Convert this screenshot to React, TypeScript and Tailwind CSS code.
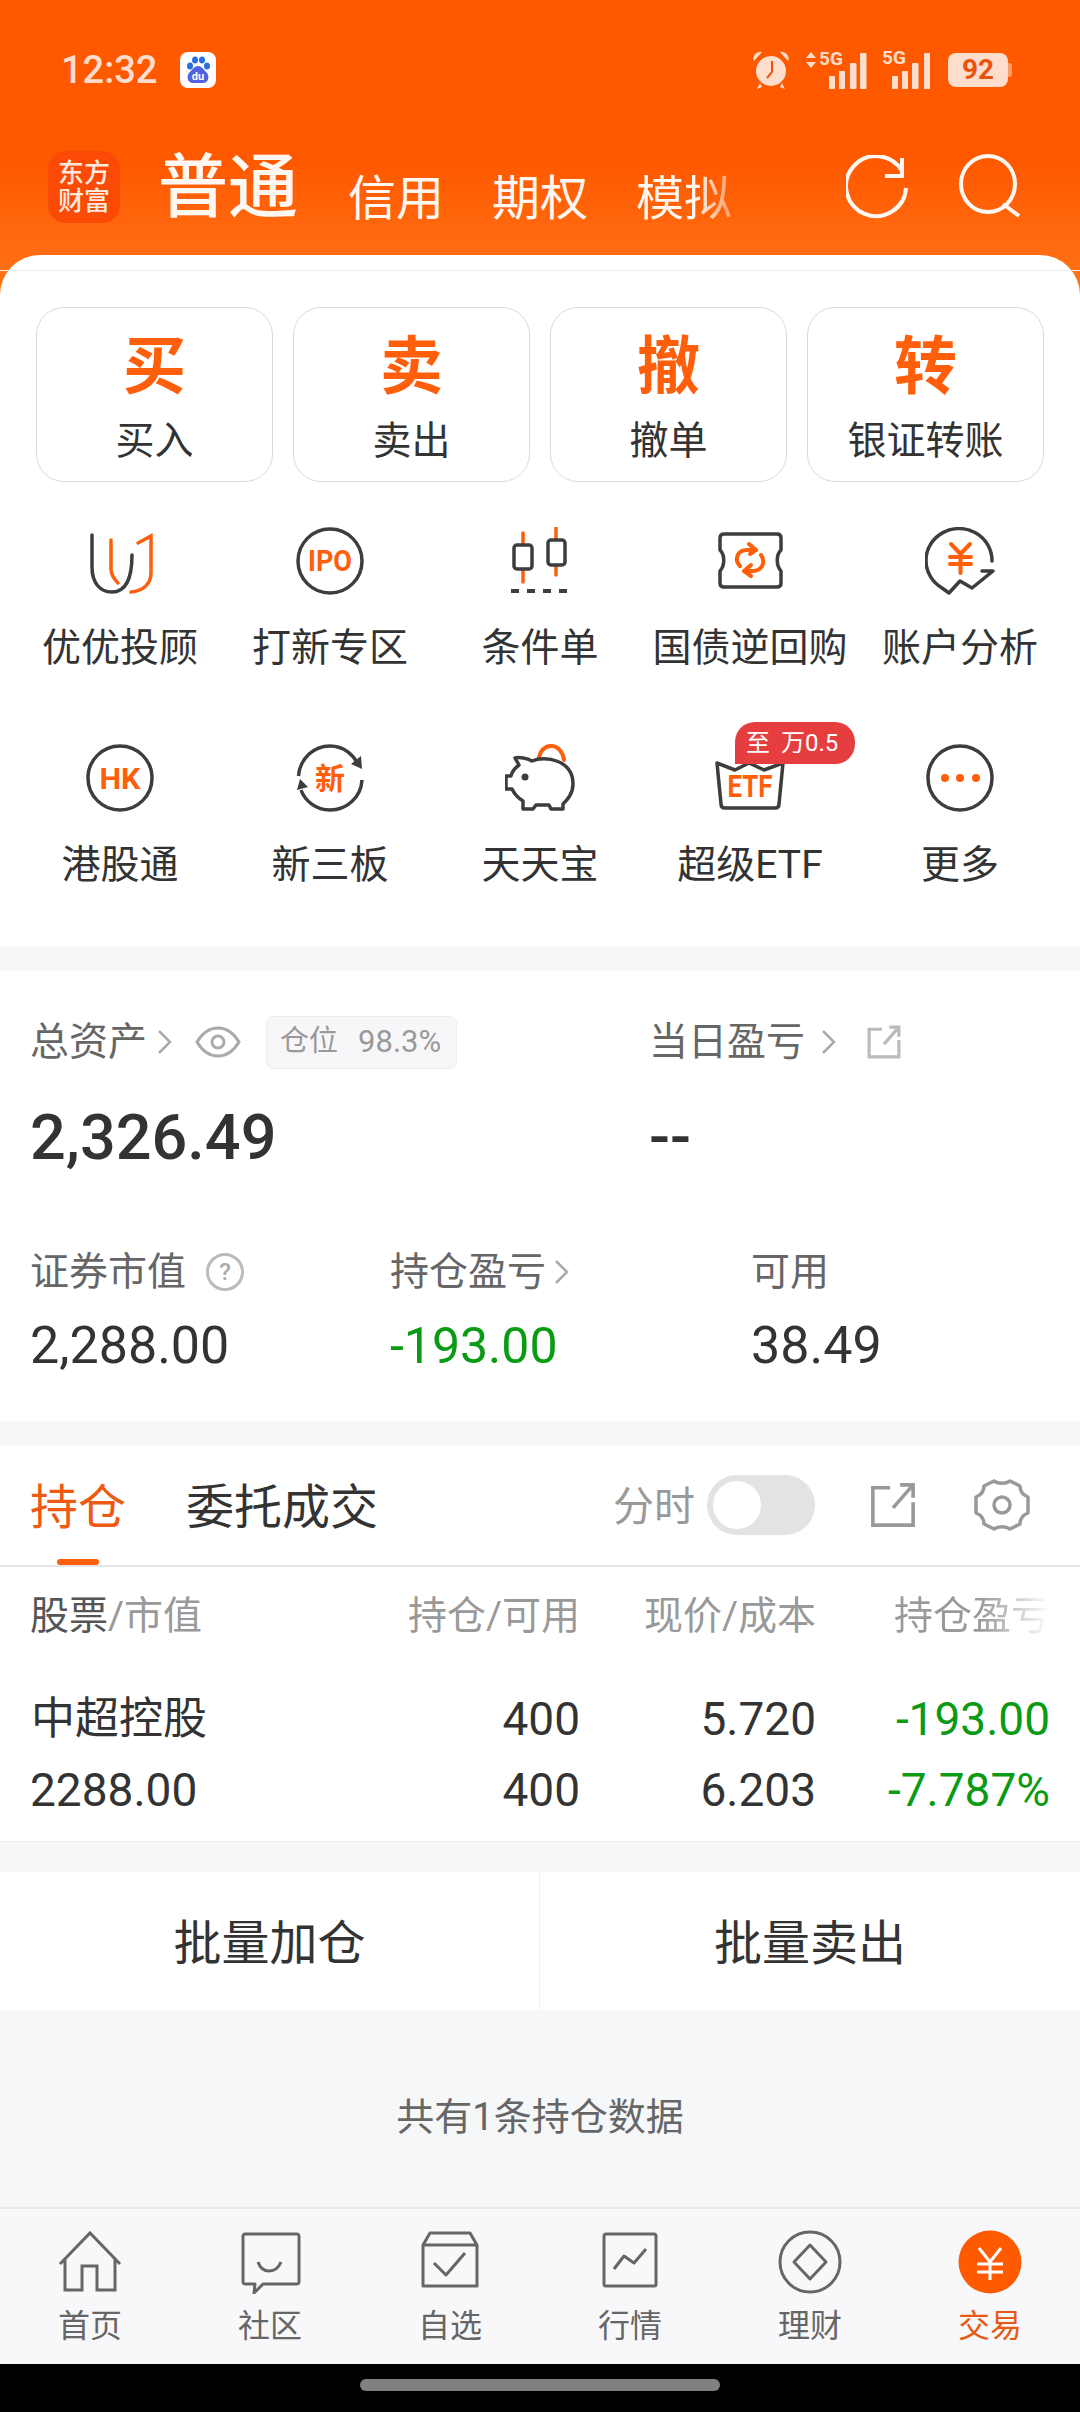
import type { ReactNode } from "react";

const ORANGE = "#ff5f0a";
const DARK = "#3d3d3d";

const actions = [
  { big: "买", label: "买入" },
  { big: "卖", label: "卖出" },
  { big: "撤", label: "撤单" },
  { big: "转", label: "银证转账" },
];

function Ring({ children }: { children?: ReactNode }) {
  return (
    <svg width="68" height="68" viewBox="0 0 68 68" fill="none">
      <circle cx="34" cy="34" r="32" stroke={DARK} strokeWidth="3.5" />
      {children}
    </svg>
  );
}

function IconUU() {
  return (
    <svg width="68" height="68" viewBox="0 0 68 68" fill="none" strokeWidth="3.5" strokeLinecap="round">
      <path d="M6 8V40C6 56 14 65 26 65C38 65 46 56 46 28" stroke={DARK} />
      <path d="M25 13V42C25 48 28 52 32 56" stroke={ORANGE} />
      <path d="M52 16L65 9V46C65 56 58 64 45 65" stroke={ORANGE} />
    </svg>
  );
}

function IconCandle() {
  return (
    <svg width="68" height="68" viewBox="0 0 68 68" fill="none" strokeLinecap="round">
      <path d="M17 6V55M50 1V48" stroke={ORANGE} strokeWidth="3.5" />
      <rect x="8" y="18" width="18" height="24" rx="3" fill="#fff" stroke={DARK} strokeWidth="3.5" />
      <rect x="42" y="13" width="17" height="25" rx="3" fill="#fff" stroke={DARK} strokeWidth="3.5" />
      <path d="M5 64H13M21 64H29M37 64H45M53 64H61" stroke={DARK} strokeWidth="4" strokeLinecap="butt" />
    </svg>
  );
}

function IconTicket() {
  return (
    <svg width="68" height="68" viewBox="0 0 68 68" fill="none" strokeLinecap="round" strokeLinejoin="round">
      <path d="M8 7H61C63.5 7 65 8.5 65 11V23C60 28 60 38 65 44V56C65 58.5 63.5 60 61 60H8C5.500 60 4 58.5 4 56V44C9 38 9 28 4 23V11C4 8.5 5.500 7 8 7Z" stroke={DARK} strokeWidth="3.500" />
      <path d="M24 39C18 33 21 23 31 23H39M33 17L40 23L34 27M45 28C50 35 46 44 37 44H29M35 38L28 44L35 49" stroke={ORANGE} strokeWidth="4" />
    </svg>
  );
}

function IconYen() {
  return (
    <svg width="70" height="68" viewBox="0 0 70 68" fill="none" strokeLinecap="round" strokeLinejoin="round">
      <path d="M67 34A33 32 0 1 0 17 61L24 66L35 54L47 61L68 44H57" stroke={DARK} strokeWidth="3.500" />
      <path d="M26 17L35.500 27L45 17M25 30H46M25 37H46M35.500 27V46" stroke={ORANGE} strokeWidth="4" />
    </svg>
  );
}

function IconNew() {
  return (
    <svg width="68" height="68" viewBox="0 0 68 68" fill="none">
      <path d="M2.500 32C4 14 18 2 34 2C48 2 58 11 63 22" stroke={DARK} strokeWidth="3.500" />
      <path d="M66 25L55 20L65 12Z" fill={DARK} />
      <path d="M66 36C65 54 50 66 34 66C20 66 9 57 5 46" stroke={DARK} strokeWidth="3.500" />
      <path d="M1 46L4 35L12 43Z" fill={DARK} />
      <text x="34" y="45" textAnchor="middle" fontSize="30" fontWeight="700" fill={ORANGE}>新</text>
    </svg>
  );
}

function IconPig() {
  return (
    <svg width="70" height="68" viewBox="0 0 70 68" fill="none" strokeLinejoin="round" strokeLinecap="round">
      <path d="M34 16C34 7 40 2 46 2C53 2 58 8 59 16" stroke={ORANGE} strokeWidth="4" />
      <path d="M10 14C14 13 22 14 27 17C40 11 68 16 68 40C68 50 62 56 58 60V65H46L44 61H31L28 65H18V57C13 54 9 49 7 45H1V32H6C7 27 10 24 14 21Z" fill="#fff" stroke={DARK} strokeWidth="3.500" />
      <circle cx="20" cy="33" r="3.500" fill={DARK} />
    </svg>
  );
}

function IconEtf() {
  return (
    <svg width="70" height="68" viewBox="0 0 70 68" fill="none" strokeLinejoin="round" strokeLinecap="round">
      <path d="M2 19L20 26L34 19L49 26L68 19L64 60C64 63 62 64 60 64H10C8 64 6 63 6 60Z" stroke={DARK} strokeWidth="3.500" />
      <text x="35" y="53" textAnchor="middle" fontSize="31" fontWeight="700" fill={ORANGE} textLength="45" lengthAdjust="spacingAndGlyphs">ETF</text>
    </svg>
  );
}

const tools: { label: string; icon: ReactNode; badge?: boolean }[] = [
  { label: "优优投顾", icon: <IconUU /> },
  {
    label: "打新专区",
    icon: (
      <Ring>
        <text x="34" y="44" textAnchor="middle" fontSize="29" fontWeight="700" fill={ORANGE} textLength="44" lengthAdjust="spacingAndGlyphs">IPO</text>
      </Ring>
    ),
  },
  { label: "条件单", icon: <IconCandle /> },
  { label: "国债逆回购", icon: <IconTicket /> },
  { label: "账户分析", icon: <IconYen /> },
  {
    label: "港股通",
    icon: (
      <Ring>
        <text x="34" y="45" textAnchor="middle" fontSize="30" fontWeight="700" fill={ORANGE} textLength="41" lengthAdjust="spacingAndGlyphs">HK</text>
      </Ring>
    ),
  },
  { label: "新三板", icon: <IconNew /> },
  { label: "天天宝", icon: <IconPig /> },
  { label: "超级ETF", icon: <IconEtf />, badge: true },
  {
    label: "更多",
    icon: (
      <Ring>
        <circle cx="19" cy="34" r="4" fill={ORANGE} />
        <circle cx="34" cy="34" r="4" fill={ORANGE} />
        <circle cx="50" cy="34" r="4" fill={ORANGE} />
      </Ring>
    ),
  },
];

function Chevron() {
  return (
    <svg width="16" height="28" viewBox="0 0 16 28" fill="none" stroke="#aaa" strokeWidth="2.500">
      <path d="M2 3L13 14L2 25" />
    </svg>
  );
}

function ShareIcon({ size, color, width }: { size: number; color: string; width: number }) {
  return (
    <svg width={size} height={size} viewBox="0 0 32 32" fill="none" stroke={color} strokeWidth={width}>
      <path d="M14 4H2V30H30V14M16 18L30 2M21 2H30V11" />
    </svg>
  );
}

function Signal({ w, bars, children }: { w: number; bars: number[]; children: ReactNode }) {
  return (
    <div className="relative h-[38px]" style={{ width: w }}>
      <svg width={w} height="38" viewBox={`0 0 ${w} 38`} fill="#ffddcc">
        <rect x={bars[0]} y="25" width="6" height="13" rx="1" />
        <rect x={bars[1]} y="20" width="6" height="18" rx="1" />
        <rect x={bars[2]} y="12" width="6.500" height="26" rx="1" />
        <rect x={bars[3]} y="2" width="6.500" height="36" rx="1" />
      </svg>
      {children}
    </div>
  );
}

function StatusBar() {
  return (
    <div className="h-[151px] pt-[45px] pl-[61px] pr-[68px] flex items-start">
      <div className="h-[50px] w-full flex items-center text-[#ffddcc]">
        <span className="text-[38px] font-medium leading-none">12:32</span>
        <div className="ml-[23px] w-[36px] h-[36px] rounded-[8px] bg-white flex items-center justify-center">
          <svg width="30" height="30" viewBox="0 0 30 30">
            <ellipse cx="7" cy="11" rx="3" ry="3.500" fill="#2a6fe0" />
            <ellipse cx="12" cy="5" rx="3" ry="3.500" fill="#2a6fe0" />
            <ellipse cx="19" cy="5" rx="3" ry="3.500" fill="#2a6fe0" />
            <ellipse cx="24" cy="11" rx="3" ry="3.500" fill="#2a6fe0" />
            <path d="M15 11C19 11 21 15 24 18C27 22 25 28 20 28H10C5 28 3 22 6 18C9 15 11 11 15 11Z" fill="#4f63e0" />
            <text x="15" y="25" textAnchor="middle" fontSize="11" fontWeight="700" fill="#fff">du</text>
          </svg>
        </div>
        <div className="ml-auto flex items-center">
          <svg width="38" height="40" viewBox="0 0 38 40" fill="#ffddcc">
            <path d="M1 9C2 4 6 1 10 2L2 11ZM37 9C36 4 32 1 28 2L36 11Z" />
            <circle cx="19" cy="21" r="15" />
            <path d="M8 33L5 39L10 37ZM30 33L33 39L28 37Z" />
            <path d="M20 11V22L15 28" stroke="#e8540f" strokeWidth="2" fill="none" />
          </svg>
          <div className="ml-[16px]">
            <Signal w={62} bars={[23, 33, 44, 54]}>
              <svg className="absolute left-0 top-[1px]" width="10" height="16" viewBox="0 0 10 16" fill="#ffddcc">
                <path d="M5 0L10 6H0ZM5 16L0 10H10Z" />
              </svg>
              <span className="absolute left-[13px] -top-[2px] text-[19px] font-bold leading-[20px]">5G</span>
            </Signal>
          </div>
          <div className="ml-[14px]">
            <Signal w={48} bars={[10, 20, 30, 42]}>
              <span className="absolute left-0 -top-[3px] text-[19px] font-bold leading-[20px]">5G</span>
            </Signal>
          </div>
          <div className="ml-[18px] flex items-center">
            <div className="w-[60px] h-[34px] rounded-[8px] bg-[#ffddcc] flex items-center justify-center text-[#e8540f] text-[28px] font-bold leading-none">92</div>
            <div className="w-[4px] h-[14px] rounded-r-[3px] bg-[#ff9c68]" />
          </div>
        </div>
      </div>
    </div>
  );
}

export default function App() {
  return (
    <div className="w-[1080px] h-[2412px] overflow-hidden flex flex-col bg-[#f6f7f9] text-[#333] font-[Roboto,'Noto_Sans_CJK_SC',sans-serif]">
      <div className="h-[295px] shrink-0 -mb-[40px] bg-linear-to-b from-[#ff5900] from-55% to-[#ff7418] text-white">
        <StatusBar />
        <div className="h-[72px] pl-[48px] pr-[56px] flex items-end">
          <div className="w-[72px] h-[72px] rounded-[18px] bg-[#fa4a05] flex flex-col items-center justify-center text-[26px] font-medium leading-[28px] text-[#ffe9df]">
            <span>东方</span>
            <span>财富</span>
          </div>
          <span className="ml-[38px] text-[70px] font-medium leading-none text-[#fff8f2]">普通</span>
          <span className="ml-[50px] text-[48px] leading-none text-[#fff8f2]">信用</span>
          <span className="ml-[48px] text-[48px] leading-none text-[#fff8f2]">期权</span>
          <span className="ml-[48px] text-[48px] leading-none bg-linear-to-r from-[#fff8f2] from-60% to-[#ff9a60] bg-clip-text text-transparent">模拟</span>
          <div className="ml-auto h-[72px] flex items-center gap-[48px]">
            <svg width="64" height="64" viewBox="0 0 64 64" fill="none" stroke="#fff8f2" strokeWidth="4">
              <path d="M56 16A30 30 0 1 0 60 33" />
              <path d="M56 3V21H39" />
            </svg>
            <svg width="66" height="66" viewBox="0 0 66 66" fill="none" stroke="#fff8f2" strokeWidth="4">
              <ellipse cx="30" cy="30" rx="27" ry="28" />
              <path d="M46 52L62 64" transform="translate(-1 -2)" />
            </svg>
          </div>
        </div>
      </div>

      <div className="shrink-0 rounded-t-[40px] bg-white pt-[15px] pb-[57px]">
        <div className="border-t border-[#ececec]" />
        <div className="mt-[36px] px-[36px] grid grid-cols-4 gap-[20px]">
          {actions.map((a) => (
            <div key={a.big} className="h-[175px] rounded-[28px] border border-[#d9d9d9] flex flex-col items-center pt-[27px]">
              <span className="text-[63px] font-bold leading-none text-[#ff5f0a]">{a.big}</span>
              <span className="mt-[21px] text-[39px] leading-[44px]">{a.label}</span>
            </div>
          ))}
        </div>
        <div className="mt-[45px] px-[15px] grid grid-cols-5 gap-y-[71px]">
          {tools.map((t) => (
            <div key={t.label} className="relative flex flex-col items-center">
              {t.icon}
              <span className="mt-[28px] text-[39px] leading-[50px] whitespace-nowrap">{t.label}</span>
              {t.badge && (
                <div className="absolute left-[90px] -top-[22px] w-[120px] h-[42px] rounded-[20px] rounded-bl-none bg-[#e63e3e] text-white text-[24px] leading-none flex items-center gap-[11px] pl-[11px]">
                  <span>至</span>
                  <span>万0.5</span>
                </div>
              )}
            </div>
          ))}
        </div>
      </div>

      <div className="shrink-0 mt-[24px] h-[450px] bg-white pt-[46px]">
        <div className="pl-[30px] grid grid-cols-[619px_1fr] text-[39px] text-[#666]">
          <div className="flex items-center h-[50px]">
            <span>总资产</span>
            <span className="ml-[10px]"><Chevron /></span>
            <svg className="ml-[22px]" width="46" height="34" viewBox="0 0 46 34" fill="none" stroke="#aaa" strokeWidth="3">
              <path d="M2 17C8 7 15 3 23 3C31 3 38 7 44 17C38 27 31 31 23 31C15 31 8 27 2 17Z" />
              <circle cx="23" cy="17" r="6" />
            </svg>
            <div className="ml-[25px] w-[191px] h-[53px] rounded-[8px] border border-[#ececec] bg-[#f7f7f9] flex items-center pl-[13px] text-[29px] text-[#999]">
              <span>仓位</span>
              <span className="ml-[20px] text-[31px] whitespace-nowrap">98.3%</span>
            </div>
          </div>
          <div className="flex items-center h-[50px]">
            <span>当日盈亏</span>
            <span className="ml-[16px]"><Chevron /></span>
            <span className="ml-[30px]"><ShareIcon size={34} color="#bbb" width={3} /></span>
          </div>
        </div>
        <div className="mt-[30px] pl-[30px] grid grid-cols-[619px_1fr] h-[80px] items-center">
          <span className="text-[63px] font-medium leading-none">2,326.49</span>
          <span className="text-[62px] font-medium leading-none">--</span>
        </div>
        <div className="mt-[70px] pl-[30px] grid grid-cols-[360px_361px_1fr] text-[39px] text-[#666]">
          <div className="flex items-center h-[50px]">
            <span>证券市值</span>
            <div className="ml-[20px] w-[38px] h-[38px] rounded-full border-[3px] border-[#bbb] text-[#aaa] text-[24px] font-medium leading-none flex items-center justify-center">?</div>
          </div>
          <div className="flex items-center h-[50px]">
            <span>持仓盈亏</span>
            <span className="ml-[8px]"><Chevron /></span>
          </div>
          <div className="flex items-center h-[50px]">可用</div>
        </div>
        <div className="mt-[19px] pl-[30px] grid grid-cols-[360px_361px_1fr] h-[60px] items-center text-[52px] leading-none">
          <span>2,288.00</span>
          <span className="text-[50px] text-[#0a9a14]">-193.00</span>
          <span>38.49</span>
        </div>
      </div>

      <div className="shrink-0 mt-[24px] bg-white border-b border-[#f0f0f0]">
        <div className="h-[122px] pl-[30px] pr-[50px] flex items-center border-b-2 border-[#e6e6e6]">
          <div className="relative pt-[6px] text-[48px] leading-[60px] text-[#ee5a12]">
            持仓
            <div className="absolute left-[27px] -bottom-[27px] w-[42px] h-[6px] rounded-full bg-[#ff5f0a]" />
          </div>
          <span className="ml-[60px] pt-[6px] text-[48px] leading-[60px]">委托成交</span>
          <span className="ml-auto pt-[6px] text-[41px] text-[#999]">分时</span>
          <div className="ml-[12px] w-[108px] h-[60px] rounded-full bg-[#e3e3e5] p-[6px]">
            <div className="w-[48px] h-[48px] rounded-full bg-white" />
          </div>
          <span className="ml-[55px]"><ShareIcon size={46} color="#999" width={2.500} /></span>
          <svg className="ml-[58px]" width="56" height="54" viewBox="0 0 56 54" fill="none" stroke="#999" strokeWidth="3.500" strokeLinejoin="round">
            <path d="M20 3C24 6 32 6 36 3L46 8C46 13 49 17 54 19V35C49 37 46 41 46 46L36 51C32 48 24 48 20 51L10 46C10 41 7 37 2 35V19C7 17 10 13 10 8Z" />
            <circle cx="28" cy="27" r="8" />
          </svg>
        </div>
        <div className="pt-[24px] px-[30px] grid grid-cols-[300px_250px_236px_234px] h-[74px] text-right text-[39px] leading-[50px] text-[#999]">
          <span className="text-left whitespace-nowrap"><span className="text-[#555]">股票</span>/市值</span>
          <span>持仓/可用</span>
          <span>现价/成本</span>
          <span className="bg-linear-to-r from-[#999] from-70% to-white bg-clip-text text-transparent">持仓盈亏</span>
        </div>
        <div className="mt-[48px] px-[30px] grid grid-cols-[300px_250px_236px_234px] h-[60px] items-center text-right text-[46px] leading-none">
          <span className="text-left text-[44px] pl-[1px]">中超控股</span>
          <span>400</span>
          <span>5.720</span>
          <span className="text-[#0a9a14]">-193.00</span>
        </div>
        <div className="mt-[11px] mb-[21px] px-[30px] grid grid-cols-[300px_250px_236px_234px] h-[60px] items-center text-right text-[46px] leading-none">
          <span className="text-left">2288.00</span>
          <span>400</span>
          <span>6.203</span>
          <span className="text-[#0a9a14]">-7.787%</span>
        </div>
      </div>

      <div className="shrink-0 mt-[30px] h-[138px] bg-white grid grid-cols-2 text-[48px]">
        <div className="flex items-center justify-center pt-[6px] border-r border-[#f0f0f0]">批量加仓</div>
        <div className="flex items-center justify-center pt-[6px]">批量卖出</div>
      </div>

      <div className="flex-1 pt-[82px] text-center text-[38px] leading-[50px] text-[#666]">共有1条持仓数据</div>

      <div className="shrink-0 h-[157px] bg-[#f8f8fa] border-t-2 border-[#e8e8ea] grid grid-cols-6 pt-[21px] text-[32px] leading-[44px] text-[#666]">
        <div className="flex flex-col items-center">
          <svg width="64" height="64" viewBox="0 0 64 64" fill="none" stroke="#666" strokeWidth="3">
            <path d="M2 34L32 3L62 34M7 28V60H24V36H39V60H57V28" />
          </svg>
          <span className="mt-[10px]">首页</span>
        </div>
        <div className="flex flex-col items-center">
          <svg width="64" height="64" viewBox="0 0 64 64" fill="none" stroke="#666" strokeWidth="3" strokeLinejoin="round">
            <path d="M7 4H59C60 4 61 5 61 6V52C61 53 60 54 59 54H25L16 63L17 54H7C6 54 5 53 5 52V6C5 5 6 4 7 4Z" />
            <path d="M20 32C24 44 38 44 43 32" />
          </svg>
          <span className="mt-[10px]">社区</span>
        </div>
        <div className="flex flex-col items-center">
          <svg width="64" height="64" viewBox="0 0 64 64" fill="none" stroke="#666" strokeWidth="3" strokeLinejoin="round">
            <path d="M5 15H59V56H5ZM5 15L12 3H52L59 15" />
            <path d="M16 33L28 45L47 23" />
          </svg>
          <span className="mt-[10px]">自选</span>
        </div>
        <div className="flex flex-col items-center">
          <svg width="64" height="64" viewBox="0 0 64 64" fill="none" stroke="#666" strokeWidth="3" strokeLinejoin="round">
            <rect x="6" y="4" width="52" height="52" rx="2" />
            <path d="M16 39L26 26L36 33L48 19" />
          </svg>
          <span className="mt-[10px]">行情</span>
        </div>
        <div className="flex flex-col items-center">
          <svg width="64" height="64" viewBox="0 0 64 64" fill="none" stroke="#666" strokeWidth="3" strokeLinejoin="round">
            <circle cx="32" cy="32" r="30" />
            <path d="M32 15L48 32L32 49L16 32Z" />
          </svg>
          <span className="mt-[10px]">理财</span>
        </div>
        <div className="flex flex-col items-center text-[#e85a10]">
          <svg width="64" height="64" viewBox="0 0 64 64" fill="none">
            <circle cx="32" cy="32" r="31.500" fill="#ff5a00" />
            <path d="M21 18L32 32L43 18M19 34H45M19 42H45M32 32V50" stroke="#fff" strokeWidth="3" />
          </svg>
          <span className="mt-[10px]">交易</span>
        </div>
      </div>

      <div className="shrink-0 h-[48px] bg-black flex justify-center pt-[15px]">
        <div className="w-[360px] h-[12px] rounded-full bg-[#808080]" />
      </div>
    </div>
  );
}
